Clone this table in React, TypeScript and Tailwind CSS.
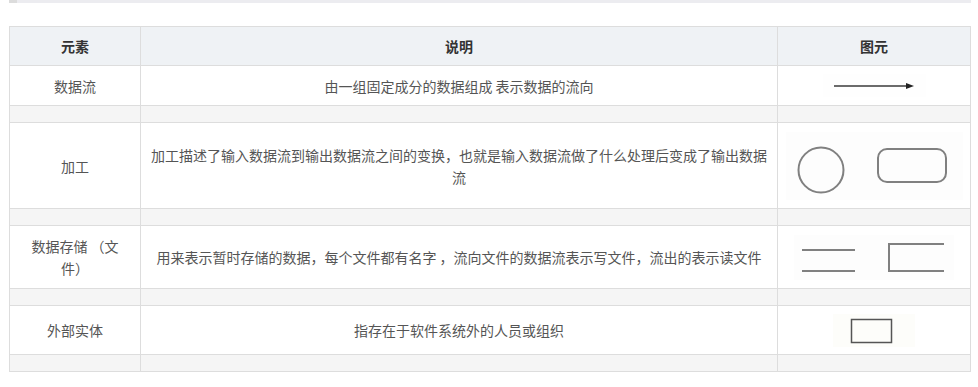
import { Fragment } from 'react';

const rows = [
  {
    name: '数据流',
    desc: '由一组固定成分的数据组成 表示数据的流向',
    h: 'h-[40px]',
    shape: 'arrow',
  },
  {
    name: '加工',
    desc: '加工描述了输入数据流到输出数据流之间的变换，也就是输入数据流做了什么处理后变成了输出数据流',
    h: 'h-[86px]',
    shape: 'process',
  },
  {
    name: 'store',
    desc: '用来表示暂时存储的数据，每个文件都有名字 ，流向文件的数据流表示写文件，流出的表示读文件',
    h: 'h-[63px]',
    shape: 'store',
  },
  {
    name: '外部实体',
    desc: '指存在于软件系统外的人员或组织',
    h: 'h-[49px]',
    shape: 'entity',
  },
];

function Shape({ kind }: { kind: string }) {
  if (kind === 'arrow') {
    return (
      <div className="mx-auto w-[103px] h-[23px] bg-[#fefefe]">
        <svg width="103" height="23" viewBox="0 0 103 23">
          <line x1="11" y1="12" x2="84" y2="12" stroke="#3a3a3a" strokeWidth="1.4" />
          <polygon points="83,9 91,12 83,15" fill="#222" />
        </svg>
      </div>
    );
  }
  if (kind === 'process') {
    return (
      <div className="mx-auto w-[177px] h-[68px] bg-[#fdfdfd]">
        <svg width="177" height="68" viewBox="0 0 177 68">
          <circle cx="35" cy="38" r="22.5" fill="none" stroke="#808080" strokeWidth="2" />
          <rect x="92" y="17" width="68" height="33" rx="9" fill="none" stroke="#808080" strokeWidth="2" />
        </svg>
      </div>
    );
  }
  if (kind === 'store') {
    return (
      <div className="mx-auto w-[160px] h-[45px] bg-[#fdfdfd]">
        <svg width="160" height="45" viewBox="0 0 160 45">
          <line x1="8" y1="15" x2="61" y2="15" stroke="#808080" strokeWidth="2" />
          <line x1="8" y1="36" x2="61" y2="36" stroke="#808080" strokeWidth="2" />
          <polyline points="150,9 95,9 95,36 150,36" fill="none" stroke="#808080" strokeWidth="2" />
        </svg>
      </div>
    );
  }
  return (
    <div className="mx-auto w-[82px] h-[33px] bg-[#fdfdfa]">
      <svg width="82" height="33" viewBox="0 0 82 33">
        <rect x="18.5" y="5.5" width="40" height="23" fill="none" stroke="#555" strokeWidth="1.5" />
      </svg>
    </div>
  );
}

function GapRow() {
  return (
    <tr className="h-[17px] bg-[#f5f5f5]">
      <td className="border border-[#dddddd]" />
      <td className="border border-[#dddddd]" />
      <td className="border border-[#dddddd]" />
    </tr>
  );
}

export default function App() {
  return (
    <div
      className="w-[978px] h-[387px] bg-white px-[9px] text-[14px] text-[#555]"
      style={{ fontFamily: '"Noto Sans CJK SC", "Noto Sans", sans-serif' }}
    >
      {/* leftover quote bar from the page above */}
      <div className="flex h-[3px] w-[962px]">
        <div className="w-[8px] bg-[#dcdcdc]" />
        <div className="flex-1 bg-[#ececf0]" />
      </div>

      <table className="mt-[23px] w-[962px] table-fixed border-collapse leading-[22px]">
        <colgroup>
          <col className="w-[131px]" />
          <col className="w-[637px]" />
          <col />
        </colgroup>
        <thead>
          <tr className="h-[39px] bg-[#eff2f5] text-[#333] font-bold">
            <th className="border border-[#dddddd]">元素</th>
            <th className="border border-[#dddddd]">说明</th>
            <th className="border border-[#dddddd]">图元</th>
          </tr>
        </thead>
        <tbody>
          {rows.map((r) => (
            <Fragment key={r.shape}>
              <tr className={r.h}>
                <td className="border border-[#dddddd] px-3 text-center">
                  {r.name === 'store' ? (
                    <>
                      数据存储 （文
                      <br />
                      件）
                    </>
                  ) : (
                    r.name
                  )}
                </td>
                <td className="border border-[#dddddd] px-[9px] text-center">{r.desc}</td>
                <td className="border border-[#dddddd] py-0">
                  <Shape kind={r.shape} />
                </td>
              </tr>
              <GapRow />
            </Fragment>
          ))}
        </tbody>
      </table>
    </div>
  );
}
